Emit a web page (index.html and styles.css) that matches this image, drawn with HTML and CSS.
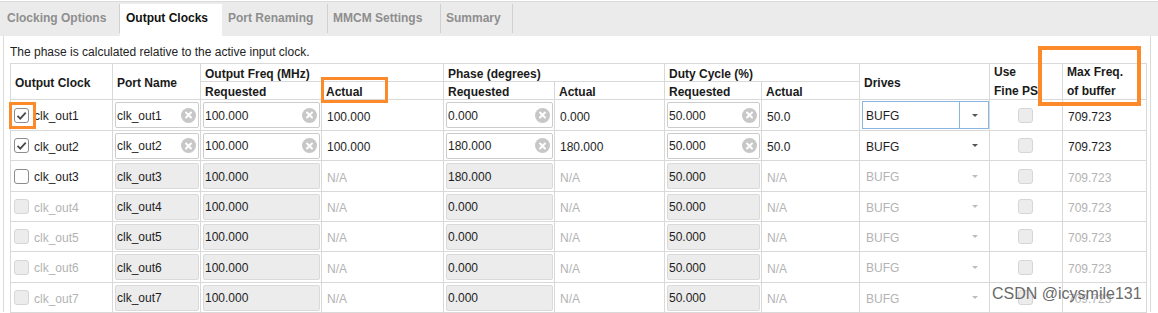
FILE: index.html
```html
<!DOCTYPE html>
<html>
	<head>
		<meta charset="utf-8">
		<title>Output Clocks</title>
		<link rel="stylesheet" href="styles.css">
	</head>
	<body>

		<!-- tabs -->
		<div class="tabBar">
			<div class="tab first">Clocking Options</div>
			<div class="tab active">Output Clocks</div>
			<div class="tab t3">Port Renaming</div>
			<div class="tab t4">MMCM Settings</div>
			<div class="tab t5">Summary</div>
		</div>

		<div class="panel">
			<p class="note">The phase is calculated relative to the active input clock.</p>

			<div class="grid">
				<!-- header -->
				<div class="c h tall">Output Clock</div>
				<div class="c h tall">Port Name</div>
				<div class="c h wide">Output Freq (MHz)</div>
				<div class="c h wide">Phase (degrees)</div>
				<div class="c h wide">Duty Cycle (%)</div>
				<div class="c h tall">Drives</div>
				<div class="c h tall two">Use<br>Fine PS</div>
				<div class="c h tall two">Max Freq.<br>of buffer</div>
				<div class="c h">Requested</div>
				<div class="c h">Actual</div>
				<div class="c h">Requested</div>
				<div class="c h">Actual</div>
				<div class="c h">Requested</div>
				<div class="c h">Actual</div>

				<!-- clk_out1 -->
				<div class="c chk"><span class="cb on"><svg viewBox="0 0 13 13"><path d="M2.5 6.8l2.8 2.8 5.4-6"/></svg></span><span class="lbl">clk_out1</span></div>
				<div class="c fld"><div class="inp"><span>clk_out1</span><span class="clr"></span></div></div>
				<div class="c fld"><div class="inp"><span>100.000</span><span class="clr"></span></div></div>
				<div class="c txt">100.000</div>
				<div class="c fld"><div class="inp"><span>0.000</span><span class="clr"></span></div></div>
				<div class="c txt">0.000</div>
				<div class="c fld"><div class="inp"><span>50.000</span><span class="clr"></span></div></div>
				<div class="c txt">50.0</div>
				<div class="c drv"><div class="sel focus"><span class="val">BUFG</span><span class="arr"></span></div></div>
				<div class="c mid"><span class="cb off"></span></div>
				<div class="c txt">709.723</div>

				<!-- clk_out2 -->
				<div class="c chk"><span class="cb on"><svg viewBox="0 0 13 13"><path d="M2.5 6.8l2.8 2.8 5.4-6"/></svg></span><span class="lbl">clk_out2</span></div>
				<div class="c fld"><div class="inp"><span>clk_out2</span><span class="clr"></span></div></div>
				<div class="c fld"><div class="inp"><span>100.000</span><span class="clr"></span></div></div>
				<div class="c txt">100.000</div>
				<div class="c fld"><div class="inp"><span>180.000</span><span class="clr"></span></div></div>
				<div class="c txt">180.000</div>
				<div class="c fld"><div class="inp"><span>50.000</span><span class="clr"></span></div></div>
				<div class="c txt">50.0</div>
				<div class="c drv"><div class="sel"><span class="val">BUFG</span><span class="arr"></span></div></div>
				<div class="c mid"><span class="cb off"></span></div>
				<div class="c txt">709.723</div>

				<!-- clk_out3 -->
				<div class="c chk"><span class="cb on"></span><span class="lbl">clk_out3</span></div>
				<div class="c fld"><div class="inp dis"><span>clk_out3</span></div></div>
				<div class="c fld"><div class="inp dis"><span>100.000</span></div></div>
				<div class="c txt gray">N/A</div>
				<div class="c fld"><div class="inp dis"><span>180.000</span></div></div>
				<div class="c txt gray">N/A</div>
				<div class="c fld"><div class="inp dis"><span>50.000</span></div></div>
				<div class="c txt gray">N/A</div>
				<div class="c drv gray"><div class="sel"><span class="val">BUFG</span><span class="arr"></span></div></div>
				<div class="c mid"><span class="cb off"></span></div>
				<div class="c txt gray">709.723</div>

				<!-- clk_out4 -->
				<div class="c chk gray"><span class="cb off"></span><span class="lbl">clk_out4</span></div>
				<div class="c fld"><div class="inp dis"><span>clk_out4</span></div></div>
				<div class="c fld"><div class="inp dis"><span>100.000</span></div></div>
				<div class="c txt gray">N/A</div>
				<div class="c fld"><div class="inp dis"><span>0.000</span></div></div>
				<div class="c txt gray">N/A</div>
				<div class="c fld"><div class="inp dis"><span>50.000</span></div></div>
				<div class="c txt gray">N/A</div>
				<div class="c drv gray"><div class="sel"><span class="val">BUFG</span><span class="arr"></span></div></div>
				<div class="c mid"><span class="cb off"></span></div>
				<div class="c txt gray">709.723</div>

				<!-- clk_out5 -->
				<div class="c chk gray"><span class="cb off"></span><span class="lbl">clk_out5</span></div>
				<div class="c fld"><div class="inp dis"><span>clk_out5</span></div></div>
				<div class="c fld"><div class="inp dis"><span>100.000</span></div></div>
				<div class="c txt gray">N/A</div>
				<div class="c fld"><div class="inp dis"><span>0.000</span></div></div>
				<div class="c txt gray">N/A</div>
				<div class="c fld"><div class="inp dis"><span>50.000</span></div></div>
				<div class="c txt gray">N/A</div>
				<div class="c drv gray"><div class="sel"><span class="val">BUFG</span><span class="arr"></span></div></div>
				<div class="c mid"><span class="cb off"></span></div>
				<div class="c txt gray">709.723</div>

				<!-- clk_out6 -->
				<div class="c chk gray"><span class="cb off"></span><span class="lbl">clk_out6</span></div>
				<div class="c fld"><div class="inp dis"><span>clk_out6</span></div></div>
				<div class="c fld"><div class="inp dis"><span>100.000</span></div></div>
				<div class="c txt gray">N/A</div>
				<div class="c fld"><div class="inp dis"><span>0.000</span></div></div>
				<div class="c txt gray">N/A</div>
				<div class="c fld"><div class="inp dis"><span>50.000</span></div></div>
				<div class="c txt gray">N/A</div>
				<div class="c drv gray"><div class="sel"><span class="val">BUFG</span><span class="arr"></span></div></div>
				<div class="c mid"><span class="cb off"></span></div>
				<div class="c txt gray">709.723</div>

				<!-- clk_out7 -->
				<div class="c chk gray"><span class="cb off"></span><span class="lbl">clk_out7</span></div>
				<div class="c fld"><div class="inp dis"><span>clk_out7</span></div></div>
				<div class="c fld"><div class="inp dis"><span>100.000</span></div></div>
				<div class="c txt gray">N/A</div>
				<div class="c fld"><div class="inp dis"><span>0.000</span></div></div>
				<div class="c txt gray">N/A</div>
				<div class="c fld"><div class="inp dis"><span>50.000</span></div></div>
				<div class="c txt gray">N/A</div>
				<div class="c drv gray"><div class="sel"><span class="val">BUFG</span><span class="arr"></span></div></div>
				<div class="c mid"><span class="cb off"></span></div>
				<div class="c txt gray">709.723</div>
			</div>
		</div>

		<!-- annotations -->
		<div class="mark markActual"></div>
		<div class="mark markCheck"></div>
		<div class="mark markMax"></div>
		<div class="watermark">CSDN @icysmile131</div>

	</body>
</html>
```

FILE: styles.css
```css
* {
	margin: 0;
	padding: 0;
	box-sizing: border-box;
}

body {
	width: 1158px;
	height: 313px;
	overflow: hidden;
	position: relative;
	background: #ffffff;
	font-family: "Liberation Sans", Arial, sans-serif;
	font-size: 12px;
	color: #1e1e1e;
}

/* tabs */
.tabBar {
	margin-top: 1px;
	border-top: 1px solid #d9d9d9;
	height: 35px;
	padding-top: 2px;
	background: #ebebeb;
	display: flex;
	align-items: flex-start;
}

.tab {
	height: 29px;
	line-height: 28px;
	padding-left: 6px;
	font-weight: bold;
	color: #8e8e8e;
	border-right: 1px solid #d0d0d0;
	white-space: nowrap;
}

.tab.first {
	width: 120px;
	padding-left: 7px;
}

.tab.active {
	width: 102px;
	height: 33px;
	background: #ffffff;
	color: #111111;
	border-right: 0;
}

.tab.t3 {
	width: 106px;
}

.tab.t4 {
	width: 113px;
	padding-left: 5px;
}

.tab.t5 {
	width: 72px;
	padding-left: 5px;
}

/* panel */
.panel {
	width: 1148px;
	margin-left: 3px;
	height: 276px;
	padding: 7px 3px 0 6px;
	border-left: 1px solid #dadada;
	border-right: 1px solid #dadada;
}

.note {
	height: 14px;
	line-height: 14px;
	padding-top: 2px;
	color: #222222;
	margin-bottom: 6px;
}

.grid {
	display: grid;
	width: 1137px;
	grid-template-columns: 102px 88px 121px 122px 111px 110px 97px 98px 130px 73px 84px;
	grid-template-rows: 18px 18px 31px 30px 31px 30px 30px 31px 30px;
	border-top: 1px solid #d9d9d9;
	border-left: 1px solid #d9d9d9;
}

.c {
	border-right: 1px solid #d9d9d9;
	border-bottom: 1px solid #d9d9d9;
	display: flex;
	align-items: center;
	min-width: 0;
	white-space: nowrap;
	overflow: hidden;
}

.h {
	font-weight: bold;
	padding: 2px 4px 0 4px;
	color: #1a1a1a;
}

.h.tall {
	grid-row: span 2;
}

.h.wide {
	grid-column: span 2;
}

.h.two {
	line-height: 19px;
	padding-top: 1px;
}

.txt {
	padding: 3px 5px 0 5px;
}

.gray {
	color: #b3b3b3;
}

.mid {
	justify-content: center;
}

/* checkbox */
.chk {
	padding-left: 3px;
}

.lbl {
	padding-top: 2px;
}

.cb {
	width: 15px;
	height: 15px;
	border: 1px solid #8c8c8c;
	border-radius: 3px;
	background: #ffffff;
	margin-right: 5px;
	display: flex;
	align-items: center;
	justify-content: center;
}

.cb svg {
	width: 13px;
	height: 13px;
	fill: none;
	stroke: #4a4a4a;
	stroke-width: 1.8;
}

.cb.off {
	border-color: #d6d6d6;
	background: #ececec;
}

.mid .cb {
	margin-right: 0;
	margin-left: -2px;
}

/* text fields */
.fld {
	padding: 0 1px 0 2px;
}

.inp {
	width: 100%;
	height: 26px;
	border: 1px solid #cccccc;
	border-radius: 2px;
	background: #ffffff;
	padding-left: 1px;
	display: flex;
	align-items: center;
	justify-content: space-between;
	color: #1e1e1e;
}

.inp span:first-child {
	padding-top: 1px;
}

.inp.dis {
	background: #ececec;
	border-color: #dadada;
}

.clr {
	width: 15px;
	height: 15px;
	margin-right: 2px;
	border-radius: 50%;
	background: #c7c7c7;
	position: relative;
}

.clr::before,
.clr::after {
	content: "";
	position: absolute;
	left: 3px;
	top: 6.5px;
	width: 9px;
	height: 2px;
	background: #ffffff;
	border-radius: 1px;
	transform: rotate(45deg);
}

.clr::after {
	transform: rotate(-45deg);
}

/* drives select */
.drv {
	padding-left: 2px;
}

.sel {
	width: 100%;
	height: 28px;
	display: flex;
	border: 1px solid transparent;
}

.sel .val {
	flex: 1;
	padding: 2px 0 0 3px;
	display: flex;
	align-items: center;
}

.sel .arr {
	width: 29px;
	border-left: 1px solid transparent;
	display: flex;
	align-items: center;
	justify-content: center;
}

.sel .arr::before {
	content: "";
	border-left: 3px solid transparent;
	border-right: 3px solid transparent;
	border-top: 3px solid #555555;
	margin-left: 1px;
}

.gray .sel .arr::before {
	border-top-color: #bdbdbd;
}

.sel.focus {
	border-color: #8ab6e2;
}

.sel.focus .arr {
	border-left-color: #8ab6e2;
}

/* annotations over the screenshot */
.mark {
	position: absolute;
	border: 3px solid #fc8a2a;
}

.markActual {
	left: 321px;
	top: 77px;
	width: 67px;
	height: 26px;
}

.markCheck {
	left: 9px;
	top: 102px;
	width: 27px;
	height: 27px;
}

.markMax {
	left: 1038px;
	top: 46px;
	width: 103px;
	height: 60px;
	border-width: 4px;
}

.watermark {
	position: absolute;
	left: 992px;
	top: 285px;
	font-size: 16px;
	color: #6a6a6a;
	white-space: nowrap;
}
```
